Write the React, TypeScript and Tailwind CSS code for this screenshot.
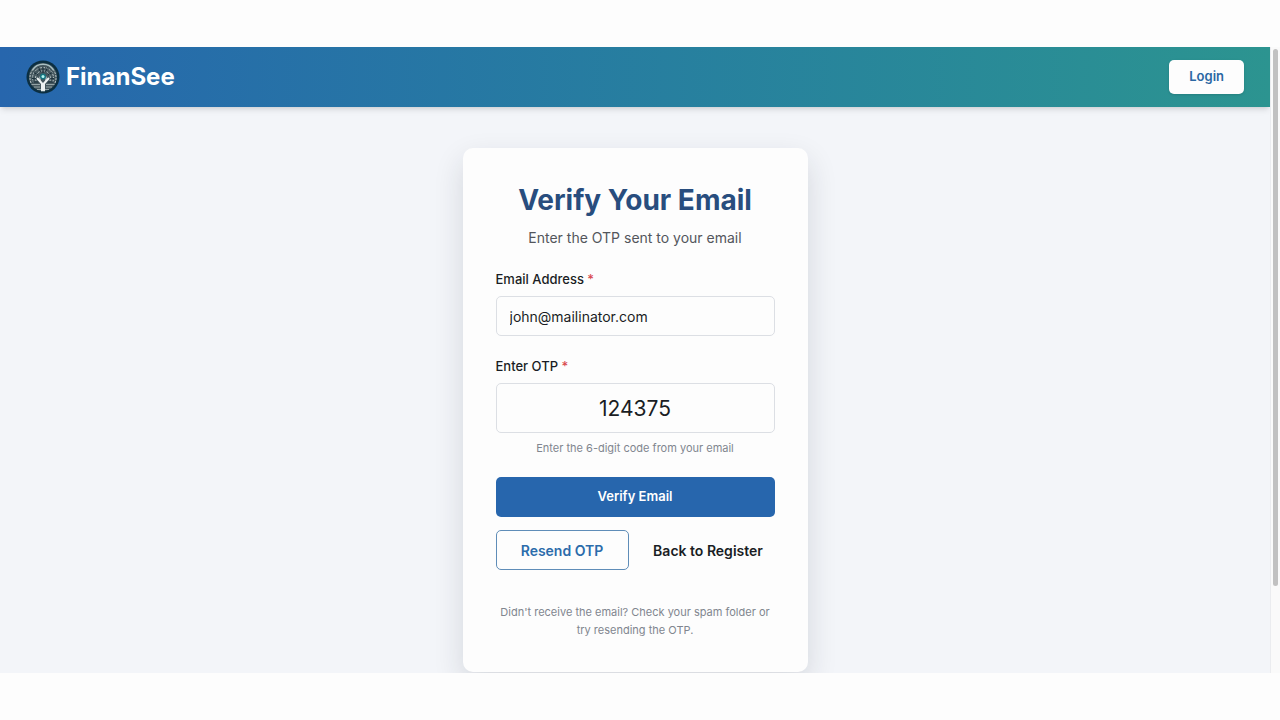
import { useState } from 'react'

function Logo() {
  return (
    <svg viewBox="0 0 68 68" className="size-[34px] shrink-0" aria-hidden="true">
      <circle cx="34" cy="34" r="33" fill="#0b2f42" />
      <circle cx="34" cy="34" r="28" fill="#44565d" />
      {/* Leaf canopy */}
      <path d="M13 20a25 25 0 0 1 42 0" fill="none" stroke="#a9c0c4" strokeWidth="3" />
      <g fill="none" stroke="#bcc9ca" strokeDasharray="4 2">
        <path d="M10 46a27 27 0 0 1 3-26M58 46a27 27 0 0 0-3-26" strokeWidth="2" />
        <path d="M15 45a21 21 0 1 1 38 0" strokeWidth="2" />
        <path d="M20 42a15 15 0 1 1 28 0" strokeWidth="2" />
      </g>
      <g fill="none" stroke="#172d38" strokeWidth="2">
        <path d="M34 14v12M25 15l4 9M43 15l-4 9M16 25l8 5M52 25l-8 5M12 37l11 1M56 37l-11 1" />
        <path d="M13 44h12M43 44h12" />
      </g>
      <g fill="none" stroke="#93a3a6" strokeWidth="2">
        <path d="M11 49h17M40 49h17M16 54h12M40 54h12M22 59h24" />
      </g>
      {/* Trunk and branches */}
      <g fill="none" stroke="#edf2f2" strokeLinecap="round">
        <path d="M32 61V47L23 37M36 61V47l9-10" strokeWidth="4" />
        <path d="M28 42v-8M40 42v-8" strokeWidth="2" />
      </g>
      <circle cx="34" cy="33" r="6" fill="#16747f" />
      <circle cx="34" cy="33" r="3" fill="#b4f8f4" />
    </svg>
  )
}

function App() {
  const [email, setEmail] = useState('john@mailinator.com')
  const [otp, setOtp] = useState('124375')

  return (
    <div className="flex min-h-screen flex-col bg-[#fdfdfd] py-[47px] font-['Inter',sans-serif] text-[#1a1d24]">
      <div className="flex grow">
        <div className="flex grow flex-col overflow-hidden bg-[#f3f5f9]">
          <header className="flex items-center justify-between bg-linear-to-r from-[#2766ad] to-[#2c9490] px-[26px] py-[13px] shadow-md">
            <a href="#" className="flex items-center gap-1.5 text-[24px] leading-[34px] font-bold text-white">
              <Logo />
              FinanSee
            </a>
            <button
              type="button"
              className="h-[34px] rounded-[5px] bg-[#fdfdfd] px-5 text-[13px] font-semibold text-[#2b67a3] shadow-sm"
            >
              Login
            </button>
          </header>

          <main className="flex grow justify-center pt-[41px]">
            <div className="w-full max-w-[345px] self-start rounded-[10px] bg-[#fdfdfd] p-[33px] shadow-[0_12px_30px_rgba(30,35,50,0.14)]">
              <h1 className="text-center text-[28px] leading-[38px] font-bold text-[#284d7e]">Verify Your Email</h1>
              <p className="mt-2 text-center text-[14px] leading-[22px] text-[#53565c]">
                Enter the OTP sent to your email
              </p>

              <form onSubmit={(e) => e.preventDefault()} className="mt-5">
                <label htmlFor="email" className="block text-[13px] leading-[20px] font-medium">
                  Email Address <span className="text-[#d94a50]">*</span>
                </label>
                <input
                  type="email"
                  id="email"
                  value={email}
                  onChange={(e) => setEmail(e.target.value)}
                  className="mt-[7px] block h-10 w-full rounded-[5px] border border-[#dcdfe4] px-[13px] text-[14px]"
                />

                <label htmlFor="otp" className="mt-5 block text-[13px] leading-[20px] font-medium">
                  Enter OTP <span className="text-[#d94a50]">*</span>
                </label>
                <input
                  type="text"
                  id="otp"
                  inputMode="numeric"
                  maxLength={6}
                  value={otp}
                  onChange={(e) => setOtp(e.target.value)}
                  className="mt-[7px] block h-[50px] w-full rounded-[5px] border border-[#dcdfe4] px-[13px] text-center text-[21px]"
                />
                <p className="mt-1.5 text-center text-[11px] leading-[18px] text-[#81868f]">
                  Enter the 6-digit code from your email
                </p>

                <button
                  type="submit"
                  className="mt-5 block h-10 w-full rounded-[5px] bg-[#2766ad] text-[13px] font-semibold text-white"
                >
                  Verify Email
                </button>
                <div className="mt-[13px] grid grid-cols-2 gap-[13px]">
                  <button
                    type="button"
                    className="h-10 rounded-[5px] border border-[#5f8db8] text-[14px] font-semibold text-[#2c6cab]"
                  >
                    Resend OTP
                  </button>
                  <button type="button" className="h-10 rounded-[5px] text-[14px] font-semibold whitespace-nowrap">
                    Back to Register
                  </button>
                </div>
              </form>

              <p className="mt-[33px] text-center text-[11px] leading-[18px] text-[#81868f]">
                Didn't receive the email? Check your spam folder or try resending the OTP.
              </p>
            </div>
          </main>
        </div>

        {/* Scroll track */}
        <div className="flex w-[10px] shrink-0 flex-col items-center border-l border-[#ebecef] bg-[#fafafa] pt-0.5">
          <div className="h-[86%] w-[5px] rounded-full bg-[#c1c1c1]" />
        </div>
      </div>
    </div>
  )
}

export default App
